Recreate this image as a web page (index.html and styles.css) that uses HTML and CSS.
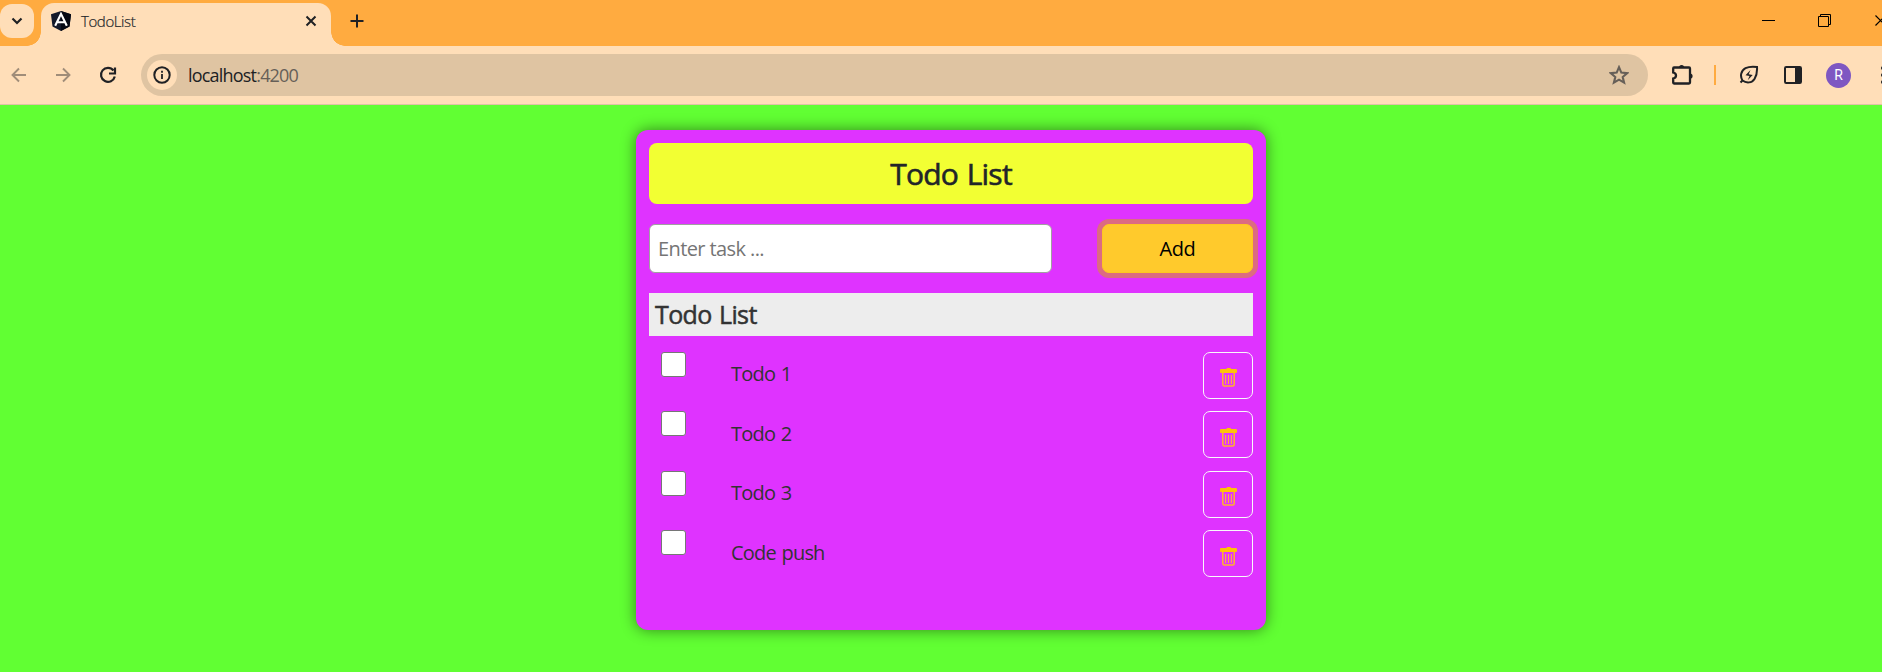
FILE: index.html
```html
<!DOCTYPE html>
<html lang="en">
<head>
<meta charset="utf-8">
<title>TodoList</title>
<link rel="stylesheet" href="styles.css">
</head>
<body>
<header class="tabstrip">
  <button class="tab-search" aria-label="Search tabs"><svg width="12" height="8" viewBox="0 0 12 8"><path d="M1.5 1.5 6 6l4.500-4.500" fill="none" stroke="#202124" stroke-width="2.200"/></svg></button>
  <div class="tab">
    <svg class="favicon" width="20" height="20" viewBox="0 0 20 20"><path d="M10 0 20 3.200 18.500 15.500 10 20 1.500 15.500 0 3.200Z" fill="#13192b"/><path d="M10 0 20 3.200 18.500 15.500 10 20Z" fill="#050914"/><path d="M4.200 14.800 10 2.800l5.800 12M6.800 11.200h6.400" fill="none" stroke="#fff" stroke-width="2.100"/></svg>
    <span class="tab-title">TodoList</span>
    <svg class="tab-close" width="12" height="12" viewBox="0 0 12 12"><path d="m1.500 1.500 9 9m0-9-9 9" stroke="#202124" stroke-width="2"/></svg>
  </div>
  <svg class="new-tab" width="14" height="14" viewBox="0 0 14 14"><path d="M7 .5v13M.5 7h13" stroke="#202124" stroke-width="2"/></svg>
  <div class="window-controls">
    <svg width="13" height="13" viewBox="0 0 13 13"><path d="M0 6.500h13" stroke="#000"/></svg>
    <svg width="13" height="13" viewBox="0 0 13 13"><path d="M.5 2.500h10v10H.5zM2.500 2.500v-2h10v10h-2" fill="none" stroke="#000"/></svg>
    <svg width="13" height="13" viewBox="0 0 13 13"><path d="m1.500 1.500 10 10m0-10-10 10" stroke="#000" stroke-width="1.200"/></svg>
  </div>
</header>
<nav class="toolbar">
  <svg class="back" width="16" height="16" viewBox="0 0 16 16"><path d="M15 8H2M8 1.500 1.500 8 8 14.500" fill="none" stroke="#a08d79" stroke-width="1.900"/></svg>
  <svg class="forward" width="16" height="16" viewBox="0 0 16 16"><path d="M1 8h13M8 1.500 14.500 8 8 14.500" fill="none" stroke="#a08d79" stroke-width="1.900"/></svg>
  <svg class="reload" width="18" height="18" viewBox="0 0 18 18"><path d="M14.500 4.500A7 7 0 1 0 15.800 10.500M16 1.500v6h-6" fill="none" stroke="#202124" stroke-width="2.200"/></svg>
  <div class="address">
    <span class="site-info"><svg width="18" height="18" viewBox="0 0 18 18"><circle cx="9" cy="9" r="7.700" fill="none" stroke="#202124" stroke-width="2"/><path d="M9 8v5M9 4.800v2" stroke="#202124" stroke-width="1.800"/></svg></span>
    <span class="url">localhost<span class="port">:4200</span></span>
    <svg class="star" width="20" height="20" viewBox="0 0 20 20"><path d="m10 2.200 2.300 5.400 5.900.5-4.500 3.900 1.400 5.700L10 14.700l-5.100 3 1.400-5.700L1.800 8.100l5.900-.5Z" fill="none" stroke="#665f58" stroke-width="2.100"/></svg>
  </div>
  <div class="actions">
    <svg width="22" height="22" viewBox="0 0 22 22"><path d="M2 3.500h15q1 0 1 1v14q0 1-1 1H2q-.8 0-.8-1v-4q2.800-.6 2.800-3t-2.800-3V4.500q0-1 .8-1Z" fill="none" stroke="#202124" stroke-width="2.300"/><path d="M7 3.500a2.600 2.600 0 0 1 5.200 0ZM18 9.400a2.600 2.600 0 0 1 0 5.200Z" fill="#202124"/></svg>
    <i class="divider"></i>
    <svg class="leaf" width="20" height="20" viewBox="0 0 20 20"><path d="M18 2q-7-1-11.500 1.200C1.500 6 1 11.500 3.500 15.500c4 3 9.500 2.500 12-1.500Q18.500 9 18 2ZM4 15l-2.500 2.500" fill="none" stroke="#202124" stroke-width="2"/><path d="m11.500 5-5 5.200 4 .8-1.800 4.200 5-5.200-4-.8Z" fill="#202124"/></svg>
    <svg class="panel" width="18" height="18" viewBox="0 0 18 18"><rect x="1" y="1" width="16" height="16" rx="1.200" fill="none" stroke="#202124" stroke-width="2"/><path d="M11 1h6v16h-6z" fill="#202124"/></svg>
    <span class="avatar">R</span>
    <svg class="menu" width="4" height="18" viewBox="0 0 4 18"><circle cx="2" cy="2" r="2"/><circle cx="2" cy="9" r="2"/><circle cx="2" cy="16" r="2"/></svg>
  </div>
</nav>
<main class="page">
  <section class="card">
    <h1 class="title">Todo List</h1>
    <form class="entry">
      <input class="task-input" type="text" placeholder="Enter task ...">
      <button class="add" type="button">Add</button>
    </form>
    <h2 class="subtitle">Todo List</h2>
    <ul class="todos">
      <li class="todo"><input class="check" type="checkbox"><span class="label">Todo 1</span><button class="delete" aria-label="Delete"><svg width="17" height="19" viewBox="0 0 17 19"><use href="#trash"/></svg></button></li>
      <li class="todo"><input class="check" type="checkbox"><span class="label">Todo 2</span><button class="delete" aria-label="Delete"><svg width="17" height="19" viewBox="0 0 17 19"><use href="#trash"/></svg></button></li>
      <li class="todo"><input class="check" type="checkbox"><span class="label">Todo 3</span><button class="delete" aria-label="Delete"><svg width="17" height="19" viewBox="0 0 17 19"><use href="#trash"/></svg></button></li>
      <li class="todo"><input class="check" type="checkbox"><span class="label">Code push</span><button class="delete" aria-label="Delete"><svg width="17" height="19" viewBox="0 0 17 19"><use href="#trash"/></svg></button></li>
    </ul>
  </section>
</main>
<svg class="symbols" width="0" height="0"><defs><g id="trash"><path d="M1 1h5.500l.5-1h3.500l.5 1H16q1 0 1 1v2q0 1-1 1H1Q0 5 0 4V2q0-1 1-1Z" fill="#ffc107"/><path d="M2.800 5v11.500q0 1.500 1.500 1.500h8.400q1.500 0 1.500-1.500V5" fill="none" stroke="#ffb22e" stroke-width="1.500"/><path d="M5.600 7v9M8.500 7v9M11.400 7v9" stroke="#ffb13c" stroke-width="1.100"/></g></defs></svg>
</body>
</html>
```
FILE: styles.css
```css
* { box-sizing: border-box; }
body {
  margin: 0;
  height: 672px;
  overflow: hidden;
  display: flex;
  flex-direction: column;
  background: #61ff33;
  color: #212529;
  font-family: "Open Sans", "Noto Sans", sans-serif;
}
svg { display: block; flex: none; }
button { padding: 0; font-family: inherit; }
.tabstrip {
  height: 46px;
  flex: none;
  display: flex;
  background: #ffab40;
  overflow: hidden;
}
.tab-search {
  position: relative;
  z-index: 1;
  width: 34px;
  height: 34px;
  margin: 4px 7px 0 0;
  border: 0;
  border-radius: 12px;
  background: #ffdeb8;
  display: grid;
  place-items: center;
}
.tab {
  position: relative;
  width: 290px;
  height: 43px;
  margin-top: 3px;
  padding: 0 14px 7px 10px;
  border-radius: 13px 13px 0 0;
  background: #ffdeb8;
  display: flex;
  align-items: center;
}
.tab::before, .tab::after {
  content: "";
  position: absolute;
  bottom: 0;
  width: 14px;
  height: 14px;
}
.tab::before { left: -14px; background: radial-gradient(circle at 0 0, #ffab40 13.5px, #ffdeb8 14px); }
.tab::after { right: -14px; background: radial-gradient(circle at 100% 0, #ffab40 13.5px, #ffdeb8 14px); }
.tab-title { margin-left: 10px; font-size: 15px; font-weight: 300; letter-spacing: -.4px; -webkit-text-stroke: .2px; }
.tab-close { margin-left: auto; }
.new-tab { margin: 14px 0 0 19px; }
.window-controls { margin: 14px -5px 0 auto; display: flex; gap: 43px; }
.toolbar {
  height: 59px;
  flex: none;
  padding: 0 0 0 11px;
  display: flex;
  align-items: center;
  background: #ffdeb8;
  border-bottom: 1px solid #dfc3a5;
  overflow: hidden;
}
.forward { margin-left: 28px; }
.reload { margin-left: 28px; }
.address {
  width: 1507px;
  height: 42px;
  flex: none;
  margin-left: 24px;
  padding: 0 19px 0 6px;
  border-radius: 21px;
  background: #dfc4a2;
  display: flex;
  align-items: center;
}
.site-info { width: 30px; height: 30px; border-radius: 50%; background: #ffdeb8; display: grid; place-items: center; }
.url { margin-left: 11px; font-size: 18px; letter-spacing: -.8px; color: #202124; }
.port { color: #665f58; }
.star { margin-left: auto; }
.actions { display: flex; align-items: center; flex: none; margin-left: 24px; }
.divider { width: 2px; height: 20px; margin-left: 20px; background: #ffab40; }
.leaf { margin-left: 23px; }
.panel { margin-left: 25px; }
.avatar {
  width: 25px;
  height: 25px;
  margin-left: 24px;
  border-radius: 50%;
  background: #7e57c2;
  color: #fff;
  font: 14px/25px Roboto, sans-serif;
  text-align: center;
}
.menu { margin-left: 30px; fill: #202124; }
.page { padding: 25px 0 0 636px; }
.card {
  width: 630px;
  height: 500px;
  padding: 13px;
  border-radius: 12px;
  background: #df33ff;
  box-shadow: 0 0 15px rgba(0, 0, 0, .48);
}
.title {
  margin: 0;
  height: 61px;
  border-radius: 8px;
  background: #f2ff33;
  font-size: 30px;
  font-weight: 400;
  letter-spacing: -.75px;
  word-spacing: 1.5px;
  line-height: 61px;
  text-align: center;
  -webkit-text-stroke: .6px;
}
.entry { margin: 20px 0; display: flex; justify-content: space-between; }
.task-input {
  width: 403px;
  height: 49px;
  padding: 0 8px;
  border: 1px solid #a0a0a0;
  border-radius: 6px;
  background: #fff;
  font: 20px "Open Sans", sans-serif;
  letter-spacing: -.6px;
}
.task-input::placeholder { color: #757575; }
.add {
  width: 151px;
  height: 49px;
  border: 1px solid #ffc720;
  border-radius: 7px;
  background: #ffca2c;
  box-shadow: 0 0 0 5px rgba(217, 164, 6, .5);
  color: #000;
  font-size: 20px;
  letter-spacing: -.4px;
}
.subtitle {
  margin: 0;
  height: 43px;
  padding-left: 6px;
  background: #ededed;
  color: #333;
  font-size: 25px;
  font-weight: 400;
  letter-spacing: -.6px;
  word-spacing: 1.3px;
  line-height: 43px;
  -webkit-text-stroke: .5px;
}
.todos { margin: 15.9px 0 0; padding: 0; list-style: none; }
.todo { height: 59.5px; display: flex; align-items: flex-start; }
.check {
  appearance: none;
  width: 25px;
  height: 25px;
  margin: 0 0 0 12px;
  border: 1px solid #767676;
  border-radius: 3px;
  background: #fff;
}
.label { margin: 7.3px auto 0 45px; font-size: 20px; letter-spacing: -.8px; word-spacing: 1.2px; line-height: 30px; color: #333; }
.delete {
  width: 50px;
  height: 47px;
  padding-top: 4.4px;
  border: 1px solid #f8f9fa;
  border-radius: 7px;
  background: transparent;
  display: grid;
  place-items: center;
}
.symbols { position: absolute; }
```
